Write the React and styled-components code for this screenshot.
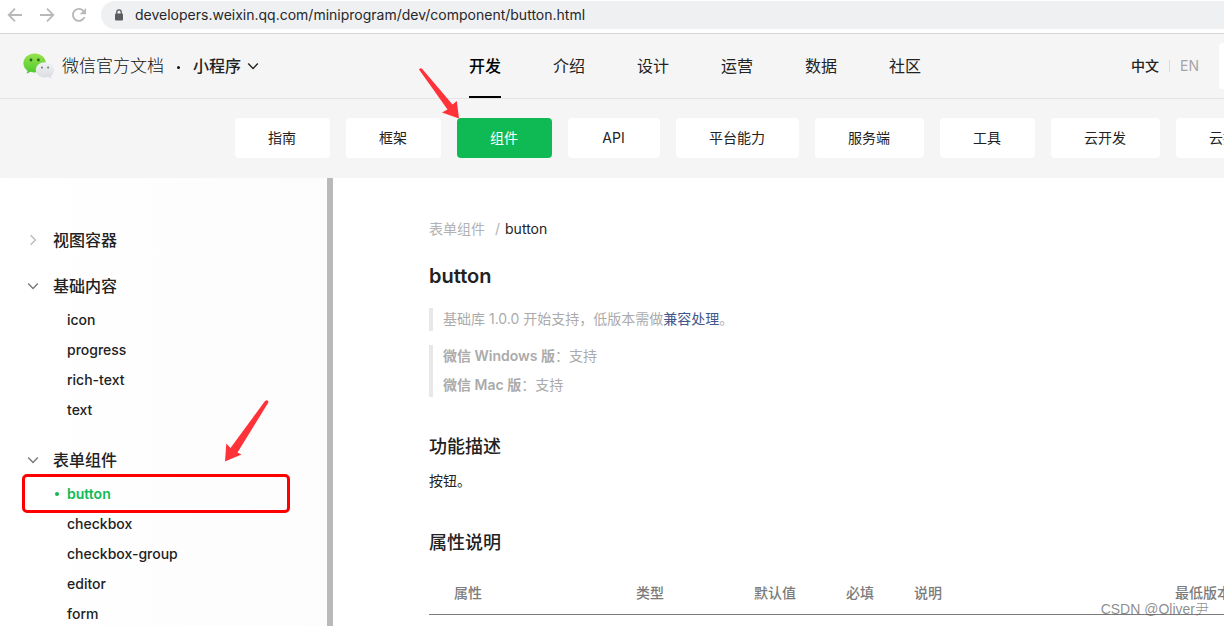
import React from "react";
import styled, { createGlobalStyle, css } from "styled-components";

const GlobalStyle = createGlobalStyle`
  *, *::before, *::after { box-sizing: border-box; }
  body {
    margin: 0;
    background: #fff;
    color: #222;
    font: 14px/24px Inter, "Noto Sans CJK SC", sans-serif;
    overflow: hidden;
  }
  h1, h2, p, ul, blockquote { margin: 0; padding: 0; }
  ul { list-style: none; }
  a { color: inherit; text-decoration: none; }
  strong { font-weight: 600; }
  svg { flex: none; }
  button { border: 0; padding: 0; background: none; color: inherit; font: inherit; cursor: pointer; }
`;

const Page = styled.div`
  display: flex;
  flex-direction: column;
  height: 100vh;
  overflow: hidden;
`;

/* Browser address bar */
const BrowserBar = styled.div`
  display: flex;
  align-items: flex-start;
  flex: none;
  height: 34px;
  border-bottom: 1px solid #d6d6d8;
`;

const BrowserButtons = styled.div`
  display: flex;
  flex: none;
  gap: 16px;
  padding: 7px 14px 0 7px;
`;

const IconButton = styled.button`
  display: flex;
  width: 16px;
  height: 16px;
`;

const UrlPill = styled.label`
  display: flex;
  flex: 1;
  align-items: center;
  gap: 11px;
  height: 28px;
  margin-top: 1px;
  padding-left: 13px;
  border-radius: 14px 0 0 14px;
  background: #eff0f2;
`;

const UrlInput = styled.input`
  flex: 1;
  min-width: 0;
  padding: 0;
  border: 0;
  outline: 0;
  background: none;
  color: #26272b;
  font: 14px/20px Inter, sans-serif;
`;

/* Site header */
const Header = styled.header`
  display: flex;
  align-items: center;
  flex: none;
  height: 65px;
  padding-left: 23px;
  border-bottom: 1px solid #e4e4e4;
  background: #f5f5f5;
`;

const Brand = styled.a`
  display: flex;
  align-items: center;
  gap: 7px;
  font-size: 17px;
  font-weight: 300;
  color: #111;
  white-space: nowrap;
`;

const Dot = styled.span`
  width: 3px;
  height: 3px;
  margin: 2px 13px 0;
  border-radius: 50%;
  background: #111;
`;

const ProductButton = styled.button`
  display: flex;
  align-items: center;
  gap: 6px;
  font-size: 16px;
  font-weight: 500;
  white-space: nowrap;
`;

const MainNav = styled.nav`
  display: flex;
  gap: 52px;
  align-self: stretch;
  margin-left: 210px;
`;

const MainLink = styled.a`
  display: flex;
  align-items: center;
  padding-top: 2px;
  border-bottom: 2px solid transparent;
  font-size: 16px;
  white-space: nowrap;
  ${(p) => p.$active && css`
    border-color: #000;
    color: #000;
    font-weight: 500;
  `}
`;

const Languages = styled.div`
  display: flex;
  align-items: center;
  gap: 10px;
  margin-left: auto;
  margin-right: 20px;
`;

const Language = styled.button`
  color: ${(p) => (p.$active ? "#222" : "#a5a5a5")};
  font-weight: ${(p) => (p.$active ? 500 : 400)};
`;

const Separator = styled.span`
  width: 1px;
  height: 12px;
  background: #dcdcdc;
`;

const SearchBox = styled.input`
  flex: none;
  width: 160px;
  height: 46px;
  margin-right: -155px;
  padding: 0 16px;
  border: 0;
  border-radius: 4px;
  background: #fff;
`;

/* Section tabs */
const SubNav = styled.nav`
  display: flex;
  flex: none;
  gap: 16px;
  padding: 19px 0 20px 235px;
  overflow: hidden;
  background: #f5f5f5;
`;

const SubLink = styled.a`
  flex: none;
  min-width: 92px;
  padding: 0 34px 0 33px;
  border-radius: 4px;
  background: ${(p) => (p.$active ? "#0fba55" : "#fff")};
  color: ${(p) => (p.$active ? "#fff" : "#222")};
  line-height: 40px;
  text-align: center;
`;

const Body = styled.div`
  display: flex;
  flex: 1;
  min-height: 0;
`;

/* Sidebar */
const Sidebar = styled.aside`
  display: flex;
  flex: none;
  flex-direction: column;
  gap: 8px;
  position: relative;
  width: 333px;
  padding: 43px 22px 0 27px;
  overflow: hidden;
  border-right: 6px solid #b9b9b9;
  background: linear-gradient(to right, #fff, #fcfcfc);
`;

const GroupTitle = styled.button`
  display: flex;
  align-items: center;
  gap: 14px;
  height: 38px;
  font-size: 16px;
  font-weight: 500;
`;

const GroupList = styled.ul`
  padding-bottom: 8px;
`;

const GroupLink = styled.a`
  display: block;
  position: relative;
  padding-left: 40px;
  color: ${(p) => (p.$active ? "#0fba55" : "#222")};
  font-weight: ${(p) => (p.$active ? 600 : 500)};
  line-height: 30px;
  ${(p) => p.$active && css`
    &::before {
      content: "";
      position: absolute;
      left: 28px;
      top: 13px;
      width: 4px;
      height: 4px;
      border-radius: 50%;
      background: currentColor;
    }
    &::after {
      content: "";
      position: absolute;
      inset: -5px 15px -4px -5px;
      border: 3px solid #fe0000;
      border-radius: 5px;
    }
  `}
`;

/* Document */
const Article = styled.main`
  flex: 1;
  min-width: 0;
  padding: 39px 0 0 96px;
  overflow: hidden;
`;

const Breadcrumb = styled.nav`
  display: flex;
  gap: 5px;
  color: #b2b2b2;
`;

const Crumb = styled.a`
  margin-right: 5px;
`;

const CurrentCrumb = styled.span`
  color: #222;
`;

const Title = styled.h1`
  margin-top: 20px;
  font-size: 20px;
  font-weight: 600;
  line-height: 30px;
`;

const Quote = styled.blockquote`
  display: flex;
  flex-direction: column;
  gap: 8px;
  margin-top: ${(p) => (p.$first ? 17 : 14)}px;
  padding: 0 0 2px 10px;
  border-left: 4px solid #e8e8e8;
  color: #ababab;
  line-height: 21px;
`;

const DocLink = styled.a`
  color: #43568c;
`;

const Heading = styled.h2`
  margin-top: 35px;
  font-size: 18px;
  font-weight: 500;
  line-height: 30px;
`;

const Paragraph = styled.p`
  margin-top: 7px;
`;

const Table = styled.table`
  width: 821px;
  margin-top: 19px;
  border-collapse: collapse;
  table-layout: fixed;
`;

const HeadCell = styled.th`
  width: ${(p) => p.$width}px;
  height: 37px;
  padding: 0 0 5px 25px;
  border-bottom: 1px solid #7b7b7b;
  color: #7b7b7b;
  font-weight: 500;
  text-align: left;
  white-space: nowrap;
`;

/* Marks over the page */
const Arrow = styled.svg`
  position: absolute;
  left: ${(p) => p.$x}px;
  top: ${(p) => p.$y}px;
  pointer-events: none;
`;

const Watermark = styled.span`
  position: absolute;
  right: 15px;
  bottom: 5px;
  color: rgba(90, 90, 90, 0.7);
  font: 300 14px/24px "Liberation Sans", "Noto Sans CJK SC", sans-serif;
`;

function Chevron({ open = true, color = "#777" }) {
  return (
    <svg width="12" height="12" viewBox="0 0 12 12" fill="none" stroke={color} strokeWidth="1.4" aria-hidden="true">
      <path d={open ? "M1.2 3.6 6 8.4l4.8-4.8" : "M3.6 1.2 8.4 6l-4.8 4.8"} />
    </svg>
  );
}

function WeChatLogo() {
  return (
    <svg width="32" height="26" viewBox="0 0 32 26" aria-hidden="true">
      <defs>
        <linearGradient id="green" x1="0" y1="0" x2="0" y2="1">
          <stop offset="0" stopColor="#98e14c" />
          <stop offset="1" stopColor="#4cc92f" />
        </linearGradient>
        <linearGradient id="silver" x1="0" y1="0" x2="0" y2="1">
          <stop offset="0" stopColor="#f1f2f4" />
          <stop offset="1" stopColor="#d9dce1" />
        </linearGradient>
      </defs>
      <path fill="url(#green)" d="M11.7.6C5.4.6.4 4.9.4 10.3c0 3 1.6 5.7 4.1 7.500L3.600 20.700l3.900-1.900c1.300.4 2.700.6 4.200.6 6.200 0 11.200-4.200 11.200-9.300S17.900.6 11.700.6Z" />
      <path fill="url(#silver)" d="M22 9.200c-5.100 0-9.200 3.400-9.200 7.700s4.100 7.700 9.200 7.700c1.200 0 2.300-.2 3.300-.5l3.200 1.600-.7-2.700c2.100-1.400 3.300-3.600 3.300-6.100 0-4.300-4-7.700-9.100-7.700Z" />
      <g fill="#23651c"><circle cx="8" cy="7" r="1.4" /><circle cx="15.4" cy="7" r="1.4" /></g>
      <g fill="#7b8189"><circle cx="19" cy="14.6" r="1.1" /><circle cx="25.1" cy="14.6" r="1.1" /></g>
    </svg>
  );
}

const sections = ["开发", "介绍", "设计", "运营", "数据", "社区"];
const tabs = ["指南", "框架", "组件", "API", "平台能力", "服务端", "工具", "云开发", "云托管"];
const groups = [
  { title: "视图容器" },
  { title: "基础内容", items: ["icon", "progress", "rich-text", "text"] },
  { title: "表单组件", items: ["button", "checkbox", "checkbox-group", "editor", "form"] },
];
const columns = [
  ["属性", 182], ["类型", 118], ["默认值", 92], ["必填", 68], ["说明", 261], ["最低版本", 100],
];

export default function App() {
  return (
    <Page>
      <GlobalStyle />
      <BrowserBar>
        <BrowserButtons>
          <IconButton aria-label="Back">
            <svg width="16" height="16" viewBox="0 0 16 16" fill="none" stroke="#b9b9bb" strokeWidth="1.8"><path d="M15 8H2M8 1.7 1.7 8 8 14.3" /></svg>
          </IconButton>
          <IconButton aria-label="Forward">
            <svg width="16" height="16" viewBox="0 0 16 16" fill="none" stroke="#b9b9bb" strokeWidth="1.8"><path d="M1 8h13M8 1.7 14.3 8 8 14.3" /></svg>
          </IconButton>
          <IconButton aria-label="Reload">
            <svg width="16" height="16" viewBox="0 0 16 16" fill="none"><path d="M13.5 10A6 6 0 1 1 12.3 3.8" stroke="#b9b9bb" strokeWidth="1.9" /><path d="M15 1v6.3H8.7Z" fill="#b9b9bb" /></svg>
          </IconButton>
        </BrowserButtons>
        <UrlPill>
          <svg width="10" height="12" viewBox="0 0 10 12" aria-hidden="true">
            <rect x="1" y="4.5" width="8" height="7" rx="1" fill="#5a5c61" />
            <path d="M2.8 5V3a2.2 2.2 0 0 1 4.4 0v2" fill="none" stroke="#5a5c61" strokeWidth="1.3" />
          </svg>
          <UrlInput aria-label="Address" defaultValue="developers.weixin.qq.com/miniprogram/dev/component/button.html" />
        </UrlPill>
      </BrowserBar>

      <Header>
        <Brand href="#home"><WeChatLogo />微信官方文档</Brand>
        <Dot />
        <ProductButton>小程序<Chevron color="#222" /></ProductButton>
        <MainNav>
          {sections.map((name, i) => (
            <MainLink key={name} href={`#${name}`} $active={i === 0}>{name}</MainLink>
          ))}
        </MainNav>
        <Languages>
          <Language $active>中文</Language>
          <Separator />
          <Language>EN</Language>
        </Languages>
        <SearchBox type="search" aria-label="搜索" />
      </Header>

      <SubNav>
        {tabs.map((name) => (
          <SubLink key={name} href={`#${name}`} $active={name === "组件"}>{name}</SubLink>
        ))}
      </SubNav>

      <Body>
        <Sidebar>
          {groups.map(({ title, items }) => (
            <section key={title}>
              <GroupTitle aria-expanded={!!items}>
                <Chevron open={!!items} color={items ? "#777" : "#bbb"} />
                {title}
              </GroupTitle>
              {items && (
                <GroupList>
                  {items.map((name) => (
                    <li key={name}>
                      <GroupLink href={`#${name}`} $active={name === "button"}>{name}</GroupLink>
                    </li>
                  ))}
                </GroupList>
              )}
            </section>
          ))}
        </Sidebar>

        <Article>
          <Breadcrumb>
            <Crumb href="#form">表单组件</Crumb>
            <span>/</span>
            <CurrentCrumb>button</CurrentCrumb>
          </Breadcrumb>
          <Title>button</Title>
          <Quote $first>
            <p>基础库 1.0.0 开始支持，低版本需做<DocLink href="#compat">兼容处理</DocLink>。</p>
          </Quote>
          <Quote>
            <p><strong>微信 Windows 版</strong>：支持</p>
            <p><strong>微信 Mac 版</strong>：支持</p>
          </Quote>
          <Heading>功能描述</Heading>
          <Paragraph>按钮。</Paragraph>
          <Heading>属性说明</Heading>
          <Table>
            <thead>
              <tr>
                {columns.map(([name, width]) => (
                  <HeadCell key={name} scope="col" $width={width}>{name}</HeadCell>
                ))}
              </tr>
            </thead>
          </Table>
        </Article>
      </Body>

      <Arrow $x={416} $y={66} width="46" height="54" viewBox="0 0 46 54" aria-hidden="true">
        <path fill="#ff323a" d="M3 3.5Q4.5 1 6.500 3.200L36.500 38.500 40.800 35 43 52.500 26 46.500 31.500 43.500Z" />
      </Arrow>
      <Arrow $x={222} $y={398} width="50" height="66" viewBox="0 0 50 66" aria-hidden="true">
        <path fill="#ff323a" d="M43 3Q46 1 46.500 4.200L15.500 54.500 19.500 56.500 3 63.500 4.300 45.500 8.500 50Z" />
      </Arrow>
      <Watermark>CSDN @Oliver尹</Watermark>
    </Page>
  );
}
